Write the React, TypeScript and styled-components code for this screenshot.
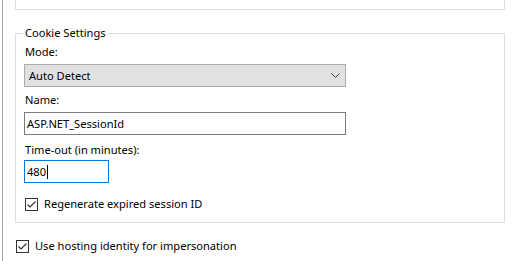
import React from 'react';
import styled, { createGlobalStyle } from 'styled-components';

const GlobalStyle = createGlobalStyle`
    body {
        margin: 0;
        background: #ffffff;
        font-family: "Noto Sans", "Segoe UI", sans-serif;
        font-size: 11.1px;
        color: #000000;
    }
`;

const Page = styled.div`
    display: flex;
    width: 515px;
    height: 261px;
    overflow: hidden;
`;

const LeftRule = styled.div`
    width: 1px;
    margin-left: 2px;
    background: #a0a0a0;
`;

const Content = styled.div`
    width: 490px;
    padding-left: 12px;
`;

const TopGroup = styled.div`
    height: 9px;
    border: 1px solid #dcdcdc;
    border-top: none;
`;

const Group = styled.fieldset`
    margin: 15px 0 0 0;
    padding: 3px 8px 10px 8px;
    border: 1px solid #dcdcdc;
    border-radius: 0;
    min-width: 0;
`;

const Legend = styled.legend`
    margin-left: -1px;
    padding: 0 2px;
    line-height: 16px;
`;

const Label = styled.div<{ $gap: number }>`
    line-height: 16px;
    padding-left: 1px;
    margin-top: ${(p) => p.$gap}px;
`;

const Field = styled.div<{ $width: number; $gap?: number; $focus?: boolean }>`
    box-sizing: border-box;
    width: ${(p) => p.$width}px;
    height: 23px;
    margin-top: ${(p) => p.$gap ?? 4}px;
    padding: 0 2px;
    display: flex;
    align-items: center;
    border: 1px solid ${(p) => (p.$focus ? '#0078d7' : '#7a7a7a')};
    background: #ffffff;
`;

const Select = styled.div`
    box-sizing: border-box;
    width: 322px;
    height: 23px;
    margin-top: 4px;
    padding: 0 5px 0 4px;
    display: flex;
    align-items: center;
    justify-content: space-between;
    border: 1px solid #adadad;
    background: #e1e1e1;
`;

const Caret = styled.span`
    display: inline-block;
    width: 1px;
    height: 14px;
    margin-left: 1px;
    background: #000000;
`;

const CheckRow = styled.label<{ $gap: number; $indent: number }>`
    display: flex;
    align-items: center;
    gap: 6px;
    margin-top: ${(p) => p.$gap}px;
    padding-left: ${(p) => p.$indent}px;
    line-height: 16px;
`;

const Box = styled.span`
    box-sizing: border-box;
    width: 13px;
    height: 13px;
    border: 1px solid #333333;
    background: #ffffff;
    display: flex;
    align-items: center;
    justify-content: center;
`;

function Check() {
    return (
        <Box>
            <svg width="11" height="11" viewBox="0 0 11 11">
                <path d="M1.5 5.5 L4 8 L9.5 2.5" fill="none" stroke="#333" strokeWidth="1.2" />
            </svg>
        </Box>
    );
}

export default function App() {
    return (
        <Page>
            <GlobalStyle />
            <LeftRule />
            <Content>
                <TopGroup />
                <Group>
                    <Legend>Cookie Settings</Legend>
                    <Label $gap={0}>Mode:</Label>
                    <Select>
                        <span>Auto Detect</span>
                        <svg width="9" height="5" viewBox="0 0 9 5">
                            <path d="M0.5 0.5 L4.5 4.5 L8.5 0.5" fill="none" stroke="#444" strokeWidth="1" />
                        </svg>
                    </Select>
                    <Label $gap={5}>Name:</Label>
                    <Field $width={322}>ASP.NET_SessionId</Field>
                    <Label $gap={7}>Time-out (in minutes):</Label>
                    <Field $width={85} $gap={2} $focus>
                        480<Caret />
                    </Field>
                    <CheckRow $gap={13} $indent={1}>
                        <Check />
                        Regenerate expired session ID
                    </CheckRow>
                </Group>
                <CheckRow $gap={15} $indent={1}>
                    <Check />
                    Use hosting identity for impersonation
                </CheckRow>
            </Content>
        </Page>
    );
}
